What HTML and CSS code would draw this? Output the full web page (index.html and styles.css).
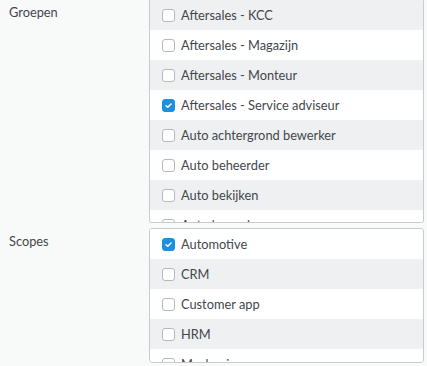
FILE: index.html
```html
<!DOCTYPE html>
<html>
<head>
<meta charset="utf-8">
<link rel="stylesheet" href="styles.css">
</head>
<body>
<div class="form">
  <div class="field">
    <div class="label">Groepen</div>
    <div class="list list-groups">
      <label class="row alt"><span class="cb"></span>Aftersales - KCC</label>
      <label class="row"><span class="cb"></span>Aftersales - Magazijn</label>
      <label class="row alt"><span class="cb"></span>Aftersales - Monteur</label>
      <label class="row"><span class="cb on"><svg viewBox="0 0 12 12"><path d="M3.3 6.2 L5.2 8 L8.8 4.3" fill="none" stroke="#fff" stroke-width="1.6" stroke-linecap="round" stroke-linejoin="round"/></svg></span>Aftersales - Service adviseur</label>
      <label class="row alt"><span class="cb"></span>Auto achtergrond bewerker</label>
      <label class="row"><span class="cb"></span>Auto beheerder</label>
      <label class="row alt"><span class="cb"></span>Auto bekijken</label>
      <label class="row"><span class="cb"></span>Auto bewerken</label>
    </div>
  </div>
  <div class="field">
    <div class="label">Scopes</div>
    <div class="list list-scopes">
      <label class="row"><span class="cb on"><svg viewBox="0 0 12 12"><path d="M3.3 6.2 L5.2 8 L8.8 4.3" fill="none" stroke="#fff" stroke-width="1.6" stroke-linecap="round" stroke-linejoin="round"/></svg></span>Automotive</label>
      <label class="row alt"><span class="cb"></span>CRM</label>
      <label class="row"><span class="cb"></span>Customer app</label>
      <label class="row alt"><span class="cb"></span>HRM</label>
      <label class="row"><span class="cb"></span>Mechanic</label>
    </div>
  </div>
</div>
</body>
</html>
```
FILE: styles.css
```css
html, body {
  margin: 0;
  padding: 0;
  background: #f8f9f9;
}
body {
  font-family: Lato, "Noto Sans", sans-serif;
  font-size: 12.8px;
  color: #43474c;
  overflow: hidden;
}
.form {
  margin-top: -1px;
  padding-left: 9px;
  display: flex;
  flex-direction: column;
  gap: 5px;
}
.field {
  display: flex;
}
.label {
  width: 140px;
  flex: none;
  padding-top: 5px;
  font-size: 12.8px;
  color: #43474c;
}
.list {
  width: 273px;
  background: #fff;
  border: 1px solid #c8cccf;
  border-radius: 3px;
  overflow: hidden;
  display: flex;
  flex-direction: column;
}
.list-groups {
  height: 222px;
  border-top-color: transparent;
}
.list-scopes {
  height: 133px;
}
.row {
  flex: none;
  height: 30px;
  display: flex;
  align-items: center;
  padding-left: 12px;
  gap: 6px;
  background: #fff;
  line-height: 1;
}
.row.alt {
  background: #eef0f1;
}
.cb {
  width: 11px;
  height: 11px;
  border: 1px solid #b3b9bf;
  border-radius: 3px;
  background: #fff;
  flex: none;
  display: flex;
}
.cb.on {
  background: #1d8fe1;
  border-color: #1d8fe1;
}
.cb svg {
  width: 11px;
  height: 11px;
}
```
